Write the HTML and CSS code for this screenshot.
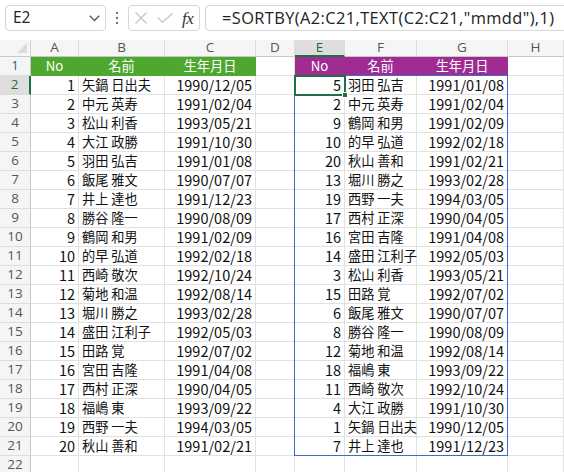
FILE: index.html
```html
<!DOCTYPE html>
<html lang="ja">
<head>
<meta charset="utf-8">
<link rel="stylesheet" href="styles.css">
</head>
<body>
<div class="app">
  <div class="toolbar">
    <div class="namebox">
      <span class="nb-text">E2</span>
      <svg class="chev" width="11" height="7" viewBox="0 0 11 7"><polyline points="0.8,0.8 5.5,5.5 10.2,0.8" fill="none" stroke="#555" stroke-width="1.3"/></svg>
    </div>
    <div class="dots"><i></i><i></i><i></i></div>
    <div class="fxbox">
      <svg class="ico-x" width="12" height="12" viewBox="0 0 12 12"><path d="M0.5 0.5 L11.5 11.5 M11.5 0.5 L0.5 11.5" stroke="#c4c4c4" stroke-width="1.2" fill="none"/></svg>
      <svg class="ico-ok" width="16" height="10" viewBox="0 0 16 10"><polyline points="0.5,4.5 5.5,9.2 15.5,0.5" fill="none" stroke="#c4c4c4" stroke-width="1.2"/></svg>
      <span class="fx">fx</span>
    </div>
    <div class="formula">=SORTBY(A2:C21,TEXT(C2:C21,"mmdd"),1)</div>
  </div>
  <div class="sheet">
    <div class="corner"><span class="tri"></span></div>
    <div class="ch">A</div><div class="ch">B</div><div class="ch">C</div><div class="ch">D</div><div class="ch selh">E</div><div class="ch">F</div><div class="ch">G</div><div class="ch">H</div>

    <div class="rh">1</div><div class="c g">No</div><div class="c g">名前</div><div class="c g">生年月日</div><div class="c"></div><div class="c p">No</div><div class="c p">名前</div><div class="c p">生年月日</div><div class="c"></div>
    <div class="rh selr">2</div><div class="c n">1</div><div class="c t">矢鍋 日出夫</div><div class="c n">1990/12/05</div><div class="c"></div><div class="c n">5</div><div class="c t">羽田 弘吉</div><div class="c n">1991/01/08</div><div class="c"></div>
    <div class="rh">3</div><div class="c n">2</div><div class="c t">中元 英寿</div><div class="c n">1991/02/04</div><div class="c"></div><div class="c n">2</div><div class="c t">中元 英寿</div><div class="c n">1991/02/04</div><div class="c"></div>
    <div class="rh">4</div><div class="c n">3</div><div class="c t">松山 利香</div><div class="c n">1993/05/21</div><div class="c"></div><div class="c n">9</div><div class="c t">鶴岡 和男</div><div class="c n">1991/02/09</div><div class="c"></div>
    <div class="rh">5</div><div class="c n">4</div><div class="c t">大江 政勝</div><div class="c n">1991/10/30</div><div class="c"></div><div class="c n">10</div><div class="c t">的早 弘道</div><div class="c n">1992/02/18</div><div class="c"></div>
    <div class="rh">6</div><div class="c n">5</div><div class="c t">羽田 弘吉</div><div class="c n">1991/01/08</div><div class="c"></div><div class="c n">20</div><div class="c t">秋山 善和</div><div class="c n">1991/02/21</div><div class="c"></div>
    <div class="rh">7</div><div class="c n">6</div><div class="c t">飯尾 雅文</div><div class="c n">1990/07/07</div><div class="c"></div><div class="c n">13</div><div class="c t">堀川 勝之</div><div class="c n">1993/02/28</div><div class="c"></div>
    <div class="rh">8</div><div class="c n">7</div><div class="c t">井上 達也</div><div class="c n">1991/12/23</div><div class="c"></div><div class="c n">19</div><div class="c t">西野 一夫</div><div class="c n">1994/03/05</div><div class="c"></div>
    <div class="rh">9</div><div class="c n">8</div><div class="c t">勝谷 隆一</div><div class="c n">1990/08/09</div><div class="c"></div><div class="c n">17</div><div class="c t">西村 正深</div><div class="c n">1990/04/05</div><div class="c"></div>
    <div class="rh">10</div><div class="c n">9</div><div class="c t">鶴岡 和男</div><div class="c n">1991/02/09</div><div class="c"></div><div class="c n">16</div><div class="c t">宮田 吉隆</div><div class="c n">1991/04/08</div><div class="c"></div>
    <div class="rh">11</div><div class="c n">10</div><div class="c t">的早 弘道</div><div class="c n">1992/02/18</div><div class="c"></div><div class="c n">14</div><div class="c t">盛田 江利子</div><div class="c n">1992/05/03</div><div class="c"></div>
    <div class="rh">12</div><div class="c n">11</div><div class="c t">西崎 敬次</div><div class="c n">1992/10/24</div><div class="c"></div><div class="c n">3</div><div class="c t">松山 利香</div><div class="c n">1993/05/21</div><div class="c"></div>
    <div class="rh">13</div><div class="c n">12</div><div class="c t">菊地 和温</div><div class="c n">1992/08/14</div><div class="c"></div><div class="c n">15</div><div class="c t">田路 覚</div><div class="c n">1992/07/02</div><div class="c"></div>
    <div class="rh">14</div><div class="c n">13</div><div class="c t">堀川 勝之</div><div class="c n">1993/02/28</div><div class="c"></div><div class="c n">6</div><div class="c t">飯尾 雅文</div><div class="c n">1990/07/07</div><div class="c"></div>
    <div class="rh">15</div><div class="c n">14</div><div class="c t">盛田 江利子</div><div class="c n">1992/05/03</div><div class="c"></div><div class="c n">8</div><div class="c t">勝谷 隆一</div><div class="c n">1990/08/09</div><div class="c"></div>
    <div class="rh">16</div><div class="c n">15</div><div class="c t">田路 覚</div><div class="c n">1992/07/02</div><div class="c"></div><div class="c n">12</div><div class="c t">菊地 和温</div><div class="c n">1992/08/14</div><div class="c"></div>
    <div class="rh">17</div><div class="c n">16</div><div class="c t">宮田 吉隆</div><div class="c n">1991/04/08</div><div class="c"></div><div class="c n">18</div><div class="c t">福嶋 東</div><div class="c n">1993/09/22</div><div class="c"></div>
    <div class="rh">18</div><div class="c n">17</div><div class="c t">西村 正深</div><div class="c n">1990/04/05</div><div class="c"></div><div class="c n">11</div><div class="c t">西崎 敬次</div><div class="c n">1992/10/24</div><div class="c"></div>
    <div class="rh">19</div><div class="c n">18</div><div class="c t">福嶋 東</div><div class="c n">1993/09/22</div><div class="c"></div><div class="c n">4</div><div class="c t">大江 政勝</div><div class="c n">1991/10/30</div><div class="c"></div>
    <div class="rh">20</div><div class="c n">19</div><div class="c t">西野 一夫</div><div class="c n">1994/03/05</div><div class="c"></div><div class="c n">1</div><div class="c t">矢鍋 日出夫</div><div class="c n">1990/12/05</div><div class="c"></div>
    <div class="rh">21</div><div class="c n">20</div><div class="c t">秋山 善和</div><div class="c n">1991/02/21</div><div class="c"></div><div class="c n">7</div><div class="c t">井上 達也</div><div class="c n">1991/12/23</div><div class="c"></div>
    <div class="rh">22</div><div class="c"></div><div class="c"></div><div class="c"></div><div class="c"></div><div class="c"></div><div class="c"></div><div class="c"></div><div class="c"></div>

    <div class="spill"></div>
    <div class="active"><span class="handle"></span></div>
  </div>
</div>
</body>
</html>
```
FILE: styles.css
```css
* { box-sizing: border-box; }
html, body { margin: 0; padding: 0; background: #fff; }
body { width: 564px; height: 472px; overflow: hidden; }
.app { width: 564px; font-family: "Noto Sans CJK JP", "Noto Sans", sans-serif; }

.toolbar {
  height: 40px;
  display: flex;
  align-items: flex-start;
  padding: 5px 0 0 5px;
  background: #fff;
  overflow: hidden;
}
.toolbar > * { flex: none; }
.namebox {
  width: 101px; height: 26px;
  border: 1px solid #d6d6d6; border-radius: 4px;
  display: flex; align-items: center; justify-content: space-between;
  padding: 0 5px 0 7px;
  background: #fff;
}
.nb-text { font-family: "Open Sans", sans-serif; font-size: 15.5px; color: #222; line-height: 1; }
.chev { display: block; }
.dots {
  width: 22px; height: 26px;
  display: flex; flex-direction: column; align-items: center; justify-content: center; gap: 2.5px;
}
.dots i { display: block; width: 2.5px; height: 2.5px; border-radius: 50%; background: #444; }
.fxbox {
  width: 72px; height: 26px;
  border: 1px solid #d6d6d6; border-radius: 4px;
  display: flex; align-items: center;
  padding-left: 6px;
  background: #fff;
}
.ico-x { margin-right: 10px; }
.ico-ok { margin-right: 9px; }
.fx { font-family: "Liberation Serif", serif; font-style: italic; font-size: 17px; color: #333; letter-spacing: -0.5px; line-height: 1; }
.formula {
  margin-left: 5px;
  width: 420px; height: 26px;
  border: 1px solid #d6d6d6; border-radius: 4px;
  padding-left: 16px;
  font-family: "Open Sans", sans-serif; font-size: 16.4px; color: #222;
  letter-spacing: 0.4px;
  line-height: 24px; white-space: nowrap;
  background: #fff;
}

.sheet {
  position: relative;
  display: grid;
  grid-template-columns: 31px 48px 86px 91px 39px 50px 72px 91px 1fr;
  grid-template-rows: 17px repeat(22, 19px);
  font-size: 14.5px;
  color: #111;
}
.corner {
  position: relative;
  background: #f5f5f5;
  border-right: 1px solid #d4d4d4; border-bottom: 1px solid #c8c8c8;
}
.tri {
  position: absolute; right: 3px; bottom: 3px;
  width: 0; height: 0;
  border-left: 10px solid transparent;
  border-bottom: 10px solid #dcdcdc;
}
.ch {
  background: #f5f5f5;
  border-right: 1px solid #dcdcdc; border-bottom: 1px solid #c8c8c8;
  display: flex; align-items: center; justify-content: center;
  font-family: "Open Sans", sans-serif; font-size: 13.5px; color: #555;
  line-height: 1;
}
.ch.selh {
  background: #dedede; color: #1e6b3f;
  border-bottom: 2px solid #1e7145;
}
.rh {
  background: #f5f5f5;
  border-right: 1px solid #c8c8c8; border-bottom: 1px solid #dcdcdc;
  display: flex; align-items: center; justify-content: center;
  font-family: "Open Sans", sans-serif; font-size: 13.5px; color: #555;
  line-height: 1;
}
.rh.selr {
  background: #dedede; color: #1e6b3f;
  border-right: 2px solid #1e7145;
}
.c {
  border-right: 1px solid #e1e1e1; border-bottom: 1px solid #e1e1e1;
  display: flex; align-items: center;
  white-space: nowrap; overflow: visible;
  line-height: 1;
}
.c.n { justify-content: flex-end; padding-right: 3px; }
.c.t { justify-content: flex-start; padding-left: 3px; font-size: 13.2px; }
.c.g { background: #4ea72e; border-color: #4ea72e; color: #fff; justify-content: center; font-size: 13.2px; }
.c.p { background: #a02b93; border-color: #a02b93; color: #fff; justify-content: center; font-size: 13.2px; }

.spill {
  position: absolute;
  grid-column: 6 / 9; grid-row: 3 / 23;
  top: -1px; left: -1px; right: 0; bottom: 0;
  border: 1px solid #3b6cc6;
  pointer-events: none;
}
.active {
  position: absolute;
  grid-column: 6 / 7; grid-row: 3 / 4;
  top: -1px; left: -1px; right: -1px; bottom: -1px;
  border: 2px solid #1e7145;
}
.handle {
  position: absolute; right: -4px; bottom: -4px;
  width: 6px; height: 6px;
  background: #1e7145; border: 1px solid #fff;
}
```
